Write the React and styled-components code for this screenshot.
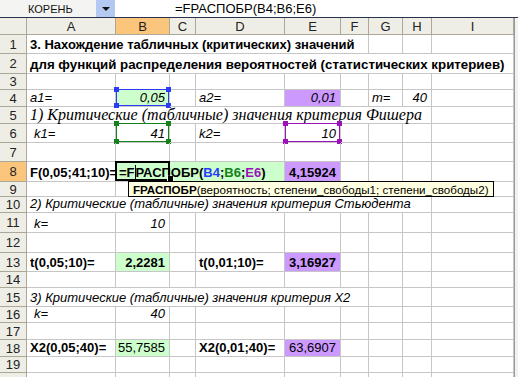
import React from "react";
import styled, { createGlobalStyle } from "styled-components";

const GlobalStyle = createGlobalStyle`
  html, body {
    margin: 0;
    padding: 0;
    background: #ffffff;
  }
  body {
    font-family: "Liberation Sans", Arial, sans-serif;
    overflow: hidden;
  }
`;

const COLS = [89, 54, 26, 89, 56, 28, 34, 29, 82];
const LETTERS = ["A", "B", "C", "D", "E", "F", "G", "H", "I"];
const ROW_H = [19, 20, 16, 17, 17, 19, 19, 20, 15, 16, 20, 20, 19, 16, 19, 16, 17, 17, 16, 20];

const GREEN = "#ccffcc";
const PURPLE = "#cc99ff";
const HEAD = "#efeee6";
const HEAD_ON = "#fbc57b";
const GRID = "#c6c6c6";

const rows = {
  1: [{ c: 0, span: 6, text: "3. Нахождение табличных (критических) значений", bold: true }],
  2: [{ c: 0, span: 9, text: "для функций распределения вероятностей (статистических критериев)", bold: true, wide: true }],
  4: [
    { c: 0, text: "a1=", italic: true },
    { c: 1, text: "0,05", italic: true, right: true, bg: GREEN, mark: "#2a3cf5" },
    { c: 3, text: "a2=", italic: true },
    { c: 4, text: "0,01", italic: true, right: true, bg: PURPLE },
    { c: 6, text: "m=", italic: true },
    { c: 7, text: "40", italic: true, right: true },
  ],
  5: [{ c: 0, span: 8, text: "1) Критические (табличные) значения критерия Фишера", italic: true, serif: true }],
  6: [
    { c: 0, text: "k1=", italic: true, indent: true },
    { c: 1, text: "41", italic: true, right: true, mark: "#13821b" },
    { c: 3, text: "k2=", italic: true },
    { c: 4, text: "10", italic: true, right: true, mark: "#9a12b8" },
  ],
  8: [
    { c: 0, text: "F(0,05;41;10)=", bold: true },
    { c: 1, span: 3, editor: true, bg: GREEN },
    { c: 4, text: "4,15924", bold: true, right: true, bg: PURPLE },
  ],
  10: [{ c: 0, span: 8, text: "2) Критические (табличные) значения критерия Стьюдента", italic: true }],
  11: [
    { c: 0, text: "k=", italic: true, indent: true },
    { c: 1, text: "10", italic: true, right: true },
  ],
  13: [
    { c: 0, text: "t(0,05;10)=", bold: true },
    { c: 1, text: "2,2281", bold: true, right: true, bg: GREEN },
    { c: 3, text: "t(0,01;10)=", bold: true },
    { c: 4, text: "3,16927", bold: true, right: true, bg: PURPLE },
  ],
  15: [{ c: 0, span: 6, text: "3) Критические (табличные) значения критерия Х2", italic: true }],
  16: [
    { c: 0, text: "k=", italic: true, indent: true },
    { c: 1, text: "40", italic: true, right: true },
  ],
  18: [
    { c: 0, text: "X2(0,05;40)=", bold: true },
    { c: 1, text: "55,7585", right: true, bg: GREEN },
    { c: 3, text: "X2(0,01;40)=", bold: true },
    { c: 4, text: "63,6907", right: true, bg: PURPLE },
  ],
};

const Page = styled.div`
  width: 518px;
  height: 377px;
  overflow: hidden;
  background: #ffffff;
`;

const Toolbar = styled.div`
  display: flex;
  height: 17px;
  border-bottom: 1px solid #27324f;
  background: #ffffff;
`;

const NameBox = styled.div`
  width: 96px;
  box-sizing: border-box;
  padding-left: 28px;
  display: flex;
  align-items: center;
  font-size: 11px;
  color: #111;
  background: #f4f4f2;
`;

const NameDrop = styled.div`
  width: 19px;
  background: #b3c9f1;
  display: flex;
  align-items: center;
  justify-content: center;
`;

const Arrow = styled.span`
  width: 0;
  height: 0;
  border-left: 4px solid transparent;
  border-right: 4px solid transparent;
  border-top: 4px solid #111;
`;

const FormulaText = styled.div`
  flex: 1;
  padding-left: 60px;
  display: flex;
  align-items: center;
  font-size: 13px;
  color: #000;
`;

const Sheet = styled.div`
  position: relative;
  display: grid;
  grid-template-columns: 27px ${COLS.map((w) => `${w}px`).join(" ")} 1fr;
  grid-template-rows: 17px ${ROW_H.map((h) => `${h}px`).join(" ")};
`;

const HeadCell = styled.div`
  box-sizing: border-box;
  background: ${(p) => (p.$on ? HEAD_ON : HEAD)};
  border-right: 1px solid #aca899;
  border-bottom: 1px solid #aca899;
  display: flex;
  align-items: center;
  justify-content: center;
  font-size: 13px;
  color: #222;
`;

const Filler = styled.div`
  background: #f2f2f2;
  border-left: 1px solid #9a9a9a;
`;

const Cell = styled.div`
  position: relative;
  box-sizing: border-box;
  grid-column: ${(p) => p.$col} / span ${(p) => p.$span};
  border-right: 1px solid ${GRID};
  border-bottom: 1px solid ${GRID};
  background: ${(p) => p.$bg || "transparent"};
  display: flex;
  align-items: flex-end;
  justify-content: ${(p) => (p.$right ? "flex-end" : "flex-start")};
  padding: 0 ${(p) => (p.$right ? "4px" : "2px")} 1px ${(p) => (p.$indent ? "7px" : "3px")};
  white-space: nowrap;
  font-family: ${(p) => (p.$serif ? `"Liberation Serif", "Times New Roman", serif` : `"Liberation Sans", Arial, sans-serif`)};
  font-size: ${(p) => (p.$serif ? "16px" : p.$wide ? "13.3px" : "13px")};
  font-weight: ${(p) => (p.$bold ? 700 : 400)};
  font-style: ${(p) => (p.$italic ? "italic" : "normal")};
  line-height: 15px;
  color: #000;
`;

const Mark = styled.div`
  position: absolute;
  left: 0;
  top: -1px;
  right: 0;
  bottom: 0;
  border: 1px solid ${(p) => p.$color};
  pointer-events: none;
`;

const Handle = styled.span`
  position: absolute;
  width: 5px;
  height: 5px;
  background: ${(p) => p.$color};
  ${(p) => (p.$top ? "top: -3px;" : "bottom: -3px;")}
  ${(p) => (p.$left ? "left: -3px;" : "right: -3px;")}
`;

const ActiveFrame = styled.div`
  position: absolute;
  left: -1px;
  top: -1px;
  width: 55px;
  bottom: 0;
  border: 2px solid #000;
  box-sizing: border-box;
  pointer-events: none;
`;

const FillHandle = styled.span`
  position: absolute;
  left: 50px;
  bottom: -3px;
  width: 5px;
  height: 5px;
  background: #000;
  border: 1px solid #fff;
`;

const EditorText = styled.span`
  position: relative;
  font-weight: 700;
  font-size: 13px;
`;

const Caret = styled.span`
  display: inline-block;
  width: 0;
  height: 14px;
  border-left: 1px solid #000;
  vertical-align: -2px;
`;

const Ref = styled.span`
  color: ${(p) => p.$color};
`;

const Tooltip = styled.div`
  position: absolute;
  left: 128px;
  top: 163px;
  height: 16px;
  box-sizing: border-box;
  padding: 0 4px;
  display: flex;
  align-items: center;
  background: #ffffe1;
  border: 1px solid #000;
  font-size: 11.6px;
  color: #000;
  white-space: nowrap;
  z-index: 3;
`;

function Marked({ color }) {
  return (
    <Mark $color={color}>
      <Handle $color={color} $top $left />
      <Handle $color={color} $top />
      <Handle $color={color} $left />
      <Handle $color={color} />
    </Mark>
  );
}

function Editor() {
  return (
    <>
      <ActiveFrame>
        <FillHandle />
      </ActiveFrame>
      <EditorText>
        =F<Caret />РАСПОБР(<Ref $color="#2a3cf5">B4</Ref>;<Ref $color="#13821b">B6</Ref>;
        <Ref $color="#9a12b8">E6</Ref>)
      </EditorText>
    </>
  );
}

function SheetRow({ n }) {
  const defs = rows[n] || [];
  const cells = [];
  let c = 0;
  while (c < COLS.length) {
    const d = defs.find((x) => x.c === c);
    const span = d && d.span ? d.span : 1;
    cells.push(
      <Cell
        key={c}
        $col={c + 2}
        $span={span}
        $bg={d && d.bg}
        $bold={d && d.bold}
        $italic={d && d.italic}
        $serif={d && d.serif}
        $right={d && d.right}
        $indent={d && d.indent}
        $wide={d && d.wide}
      >
        {d && d.editor ? <Editor /> : d && d.text}
        {d && d.mark && <Marked color={d.mark} />}
      </Cell>
    );
    c += span;
  }
  return (
    <>
      {/* the last row is only a sliver at the window's bottom edge */}
      <HeadCell $on={n === 8}>{n < ROW_H.length ? n : ""}</HeadCell>
      {cells}
      <Filler />
    </>
  );
}

export default function App() {
  return (
    <Page>
      <GlobalStyle />
      <Toolbar>
        <NameBox>КОРЕНЬ</NameBox>
        <NameDrop>
          <Arrow />
        </NameDrop>
        <FormulaText>=FРАСПОБР(B4;B6;E6)</FormulaText>
      </Toolbar>
      <Sheet>
        <HeadCell />
        {LETTERS.map((l) => (
          <HeadCell key={l} $on={l === "B"}>
            {l}
          </HeadCell>
        ))}
        <Filler />
        {ROW_H.map((_, i) => (
          <SheetRow key={i} n={i + 1} />
        ))}
        <Tooltip>
          <b>FРАСПОБР</b>(вероятность; степени_свободы1; степени_свободы2)
        </Tooltip>
      </Sheet>
    </Page>
  );
}
